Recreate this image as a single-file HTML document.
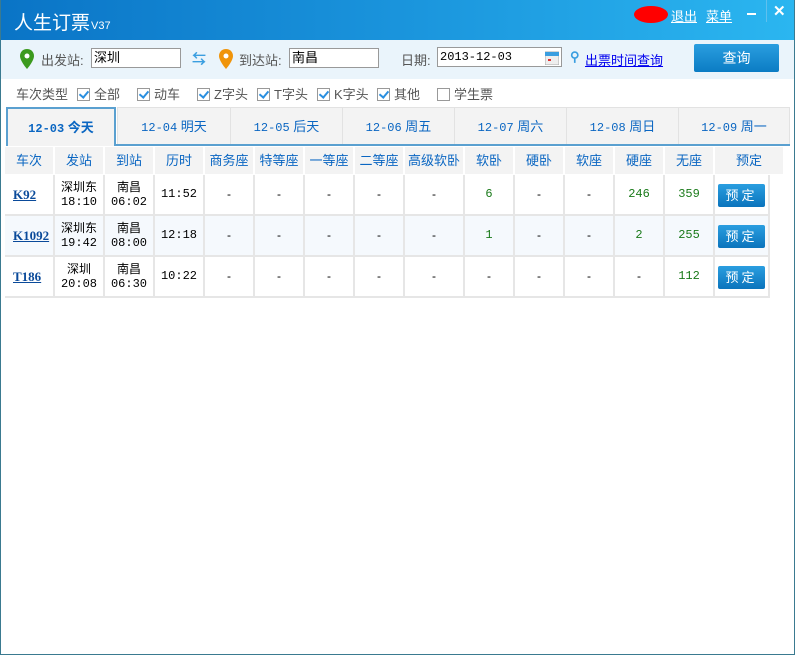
<!DOCTYPE html>
<html><head><meta charset="utf-8"><style>
*{margin:0;padding:0;box-sizing:border-box}
body{width:795px;height:655px;position:relative;overflow:hidden;background:#fff;font-family:"Liberation Sans","Noto Sans CJK SC",sans-serif;font-size:12px;color:#333}
.frame{position:absolute;left:0;top:0;width:795px;height:655px;border-left:1px solid #3a7a90;border-right:1px solid #3a7a90;border-bottom:1px solid #3a7a90}
.title{position:absolute;left:0;top:0;width:795px;height:40px;background:linear-gradient(90deg,#0a74c6 0%,#1a94dc 50%,#2bb6f0 100%)}
.title .t{position:absolute;left:14px;top:8px;color:#fff;font-size:19px}
.title .v{font-size:11px;margin-left:1px}
.title a{position:absolute;top:6px;color:#fff;font-size:13px;text-decoration:underline}
.bar{position:absolute;left:1px;top:40px;width:793px;height:39px;background:#eaf4fb}
.lbl{position:absolute;color:#555;font-size:13px}
.inp{position:absolute;height:20px;border:1px solid #999;background:#fff;font-size:13px;color:#000;padding:1px 2px;line-height:16px}
.btn{position:absolute;left:694px;top:44px;width:85px;height:28px;background:linear-gradient(#2a9ee0,#0b7cc4);border-radius:2px;color:#fff;font-size:14px;text-align:center;line-height:28px}
.flt{position:absolute;top:84px;font-size:13px;color:#555}
.cb{display:inline-block;width:13px;height:13px;border:1px solid #999;vertical-align:-2px;margin-right:4px;position:relative;background:#fff}
.cb.on:after{content:"";position:absolute;left:3px;top:0px;width:4px;height:7px;border:solid #2a8fe0;border-width:0 2px 2px 0;transform:rotate(40deg)}
.tab{position:absolute;top:107px;height:38px;background:#f3f3f3;border:1px solid #e2e2e2;color:#0a66c2;font-size:13px;text-align:center;line-height:38px}
.tab.sel{border:2px solid #5aa0d0;border-bottom:none;height:39px;font-weight:bold;z-index:2}
.m{font-family:"Liberation Mono",monospace;font-size:12px}
.tline{position:absolute;left:116px;top:144px;width:674px;height:2px;background:#5aa0d0}
.th,.td{position:absolute;text-align:center}
.th{top:147px;height:27px;background:#f3f3f3;color:#0a66c2;font-size:13px;line-height:27px;border-right:2px solid #fff}
.td{height:41px;border-right:2px solid #e6e6e6;border-bottom:2px solid #e6e6e6;font-size:12px;color:#000;display:flex;align-items:center;justify-content:center;flex-direction:column;line-height:15px}
.td .mm{font-family:"Liberation Mono",monospace}
.g{color:#1a7a1a;font-family:"Liberation Mono",monospace}
.tn{color:#0a4a9a;font-weight:bold;text-decoration:underline;font-family:"Liberation Serif",serif;font-size:13px}
.bk{width:47px;height:23px;background:linear-gradient(#2a9ee0,#0b74bc);border-radius:2px;color:#fff;font-size:13px;line-height:23px;letter-spacing:3px;text-align:center;margin-top:2px}
</style></head><body>
<div class="title">
<div class="t">人生订票<span class="v">V37</span></div>
<div style="position:absolute;left:634px;top:6px;width:34px;height:17px;background:#f00;border-radius:50%"></div>
<a style="left:671px">退出</a><a style="left:706px">菜单</a>
<div style="position:absolute;left:747px;top:13px;width:9px;height:2px;background:#fff"></div>
<div style="position:absolute;left:766px;top:0;width:1px;height:22px;background:#5fc0ee"></div>
<div style="position:absolute;left:773px;top:2px;color:#fff;font-size:15px;font-weight:bold">✕</div>
</div>
<div class="bar"></div>
<svg style="position:absolute;left:20px;top:49px" width="14" height="20" viewBox="0 0 14 20"><path d="M7 0C3 0 0 3 0 7c0 5 7 13 7 13s7-8 7-13C14 3 11 0 7 0z" fill="#3c9a1e"/><circle cx="7" cy="7" r="2.5" fill="#fff"/></svg>
<div class="lbl" style="left:41px;top:50px">出发站:</div>
<div class="inp" style="left:91px;top:48px;width:90px">深圳</div>
<div style="position:absolute;left:192px;top:49px;color:#3a9ee0;font-size:14px;font-weight:bold">⇆</div>
<svg style="position:absolute;left:219px;top:49px" width="14" height="20" viewBox="0 0 14 20"><path d="M7 0C3 0 0 3 0 7c0 5 7 13 7 13s7-8 7-13C14 3 11 0 7 0z" fill="#f0940a"/><circle cx="7" cy="7" r="2.5" fill="#fff"/></svg>
<div class="lbl" style="left:239px;top:50px">到达站:</div>
<div class="inp" style="left:289px;top:48px;width:90px">南昌</div>
<div class="lbl" style="left:401px;top:50px">日期:</div>
<div class="inp" style="left:437px;top:47px;width:125px;font-family:'Liberation Mono',monospace;font-size:12px">2013-12-03</div>
<svg style="position:absolute;left:545px;top:50px" width="14" height="15"><rect x="0" y="2" width="14" height="13" fill="#eee" stroke="#aaa"/><rect x="0" y="2" width="14" height="4" fill="#3a9ee0"/><rect x="3" y="9" width="3" height="2" fill="#e03030"/></svg>
<div style="position:absolute;left:570px;top:49px;color:#3a9ee0;font-size:13px;font-weight:bold">⚲</div>
<div style="position:absolute;left:585px;top:50px;color:#0000ee;font-size:13px;text-decoration:underline">出票时间查询</div>
<div class="btn">查询</div>
<div class="flt" style="left:16px">车次类型</div>
<div class="flt" style="left:77px"><span class="cb on"></span>全部</div>
<div class="flt" style="left:137px"><span class="cb on"></span>动车</div>
<div class="flt" style="left:197px"><span class="cb on"></span>Z字头</div>
<div class="flt" style="left:257px"><span class="cb on"></span>T字头</div>
<div class="flt" style="left:317px"><span class="cb on"></span>K字头</div>
<div class="flt" style="left:377px"><span class="cb on"></span>其他</div>
<div class="flt" style="left:437px"><span class="cb"></span>学生票</div>
<div class="tab sel" style="left:6px;width:110px"><span class="m" style="font-weight:bold">12-03</span> 今天</div>
<div class="tab" style="left:117px;width:114px"><span class="m">12-04</span> 明天</div>
<div class="tab" style="left:230px;width:113px"><span class="m">12-05</span> 后天</div>
<div class="tab" style="left:342px;width:113px"><span class="m">12-06</span> 周五</div>
<div class="tab" style="left:454px;width:113px"><span class="m">12-07</span> 周六</div>
<div class="tab" style="left:566px;width:113px"><span class="m">12-08</span> 周日</div>
<div class="tab" style="left:678px;width:112px"><span class="m">12-09</span> 周一</div>
<div class="tline"></div>
<div id="t"></div>
<script>
var xs=[5,55,105,155,205,255,305,355,405,465,515,565,615,665,715,770];
var hd=["车次","发站","到站","历时","商务座","特等座","一等座","二等座","高级软卧","软卧","硬卧","软座","硬座","无座","预定"];
var rows=[["K92","深圳东<br><span class=mm>18:10</span>","南昌<br><span class=mm>06:02</span>","<span class=mm>11:52</span>","-","-","-","-","-","6","-","-","246","359"],
["K1092","深圳东<br><span class=mm>19:42</span>","南昌<br><span class=mm>08:00</span>","<span class=mm>12:18</span>","-","-","-","-","-","1","-","-","2","255"],
["T186","深圳<br><span class=mm>20:08</span>","南昌<br><span class=mm>06:30</span>","<span class=mm>10:22</span>","-","-","-","-","-","-","-","-","-","112"]];
var h="";
for(var i=0;i<15;i++){var w=(i==14?785:xs[i+1])-xs[i];h+='<div class="th" style="left:'+xs[i]+'px;width:'+w+'px">'+hd[i]+'</div>';}
for(var r=0;r<3;r++){var y=175+r*41;var bg=r==1?"#f5f9fd":"#fff";
h+='<div style="position:absolute;left:5px;top:'+y+'px;width:2px;height:41px;background:#e6e6e6"></div>';
for(var i=0;i<15;i++){var w=xs[i+1]-xs[i];var c=rows[r][i];var cont;
if(i==0)cont='<span class="tn">'+c+'</span>';else if(i==14)cont='<div class="bk">预定</div>';
else if(c!="-"&&i>=9)cont='<span class="g">'+c+'</span>';else cont=c;
var st=i==0?'align-items:flex-start;padding-left:8px;':'';
h+='<div class="td" style="left:'+xs[i]+'px;top:'+y+'px;width:'+w+'px;background:'+bg+';'+st+'">'+cont+'</div>';}}
document.getElementById("t").innerHTML=h;
</script>
<div class="frame"></div>
</body></html>
